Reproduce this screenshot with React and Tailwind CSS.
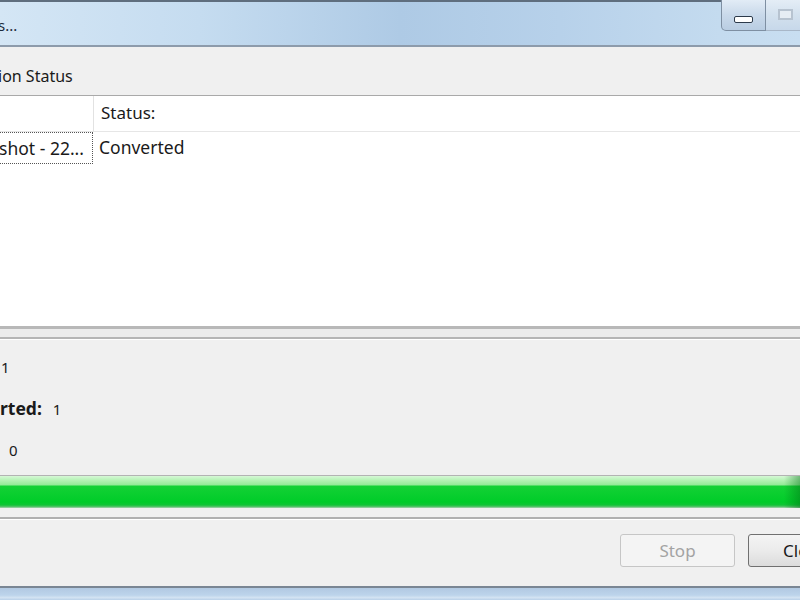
import React from "react";

export default function App() {
  const font = { fontFamily: '"Noto Sans", "Open Sans", sans-serif' };
  return (
    <div
      className="w-[800px] h-[600px] overflow-hidden flex flex-col bg-[#f0f0f0] text-[#1a1a1a]"
      style={font}
    >
      {/* Title bar */}
      <div className="h-[47px] shrink-0 flex border-t-2 border-t-[#5f6e7e] border-b-2 border-b-[#8d9bab] bg-[linear-gradient(to_right,#d4e6f5_0%,#c5dcf0_25%,#aecae5_50%,#b7d1ea_70%,#c4dbef_90%,#c8def1_100%)]">
        <div className="flex-1 pt-[13px] text-[15px] leading-[20px] text-[#1b2a3a] -ml-[2px]">s...</div>
        <div className="flex items-start -mt-[2px]">
          <div className="w-[45px] h-[31px] border-l border-b border-r border-[#7e8fa2] rounded-bl-[5px] bg-[linear-gradient(to_bottom,#e2ecf6,#c9d9ea_50%,#b9cde2)] flex items-center justify-center pt-[8px]">
            <div className="w-[19px] h-[7px] rounded-[2px] border-[1.5px] border-[#2d3b4b] bg-white" />
          </div>
          <div className="w-[34px] h-[31px] border-b border-[#a8b7c8] bg-[linear-gradient(to_bottom,#e4edf6,#d3e1ee_50%,#c7d8ea)] flex items-start pl-[12px] pt-[9px]">
            <div className="w-[15px] h-[11px] border-[2px] border-[#b7c3d0] bg-[#e6edf4]" />
          </div>
        </div>
      </div>

      {/* Label */}
      <div className="h-[48px] shrink-0 pt-[19px] text-[16px] leading-[20px] -ml-[2px]">ion Status</div>

      {/* List view */}
      <div className="h-[234px] shrink-0 bg-white border-t border-[#a9a9a9] border-b-[3px] border-b-[#b8b8b8] flex flex-col">
        <div className="h-[36px] flex border-b border-[#e6e6e6]">
          <div className="w-[94px] border-r border-[#e2e2e2]" />
          <div className="pl-[7px] pt-[7px] text-[17px] leading-[20px]">Status:</div>
        </div>
        <div className="h-[32px] flex">
          <div className="w-[93px] border border-dotted border-[#555] border-l-0 flex items-center justify-end pr-[8px] text-[17.5px] leading-[20px] whitespace-nowrap overflow-hidden">
            shot - 22...
          </div>
          <div className="pl-[6px] flex items-center text-[17.5px] leading-[20px] pb-[2px]">Converted</div>
        </div>
      </div>

      {/* Groove separator */}
      <div className="h-[8px] shrink-0 bg-[#ececec]" />
      <div className="h-[3px] shrink-0 border-t-2 border-[#b5b5b5] bg-white" />

      {/* Stats */}
      <div className="h-[135px] shrink-0 flex flex-col pt-[17px] gap-[21px] text-[15px] leading-[20px]">
        <div className="pl-[1px]">1</div>
        <div className="flex items-baseline">
          <span className="font-bold text-[17.5px]">rted:</span>
          <span className="ml-[11px]">1</span>
        </div>
        <div className="pl-[9px]">0</div>
      </div>

      {/* Progress bar */}
      <div className="h-[33px] shrink-0 border-t border-[#b3b3b3] relative bg-[linear-gradient(to_bottom,#d6f8d6_0px,#b6f3b6_4px,#93ea96_9px,#14d135_10px,#00cc29_26px,#11c436_29px,#5fc272_31px,#b7d9bd_32px)]">
        <div className="absolute right-0 top-0 bottom-0 w-[16px] bg-[linear-gradient(to_right,rgba(0,120,20,0),rgba(0,110,20,0.45))]" />
      </div>

      {/* Gap + separator */}
      <div className="h-[9px] shrink-0 bg-[#f0f0f0]" />
      <div className="h-[3px] shrink-0 border-t-2 border-[#b0b0b0] bg-white" />

      {/* Buttons */}
      <div className="h-[66px] shrink-0 flex items-start pt-[14px] pl-[620px] gap-[13px] overflow-hidden">
        <div className="w-[115px] h-[33px] shrink-0 rounded-[3px] border border-[#c6c6c6] bg-[#f4f4f4] flex items-center justify-center text-[17px] text-[#a3a3a3]">
          Stop
        </div>
        <div className="w-[115px] h-[33px] shrink-0 rounded-[3px] border border-[#707070] bg-[linear-gradient(to_bottom,#f4f4f4,#ebebeb_50%,#dcdcdc)] flex items-center pl-[34px] text-[17px]">
          Close
        </div>
      </div>

      {/* Bottom frame */}
      <div className="flex-1 border-t-2 border-[#7a8694] bg-[linear-gradient(to_bottom,#b1c9e2,#bdd4eb_60%,#d3e3f2_80%,#b9d0e8)]" />
    </div>
  );
}
